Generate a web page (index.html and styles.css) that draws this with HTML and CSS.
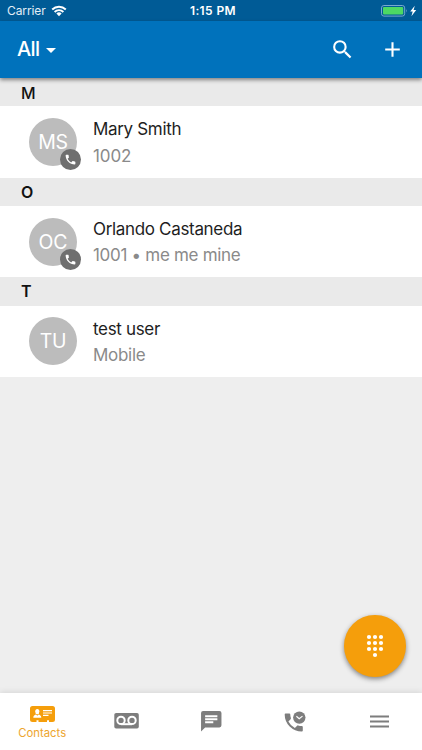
FILE: index.html
```html
<!DOCTYPE html>
<html lang="en">
<head>
<meta charset="utf-8">
<title>Contacts</title>
<link rel="stylesheet" href="styles.css">
</head>
<body>
<div class="app">
  <div class="status">
    <div class="carrier"><span>Carrier</span>
      <svg width="16" height="12" viewBox="0 0 16 12"><path d="M1.2 4.5a9.7 9.7 0 0 1 13.6 0M3.6 7a6.2 6.2 0 0 1 8.8 0" fill="none" stroke="#fff" stroke-width="1.9"/><path d="M5.4 8.6a3.7 3.7 0 0 1 5.2 0L8 11.3z" fill="#fff"/></svg>
    </div>
    <span class="time">1:15 PM</span>
    <svg class="battery" width="37" height="12" viewBox="0 0 37 12"><rect x=".5" y=".5" width="23.2" height="10.6" rx="2.4" fill="none" stroke="#78a9cf"/><rect x="2" y="2" width="20.2" height="7.6" rx="1" fill="#4cd964"/><path d="M25 4q1.4 1.8 0 3.6z" fill="#78a9cf"/><path d="M33.8 .8 29.2 6.5h2.5L30.4 11.2 35.2 5.1h-2.6z" fill="#fff"/></svg>
  </div>
  <header class="bar">
    <div class="filter"><span>All</span><svg width="10" height="5" viewBox="0 0 10 5"><path d="M0 0h10L5 5z" fill="#fff"/></svg></div>
    <div class="actions">
      <svg width="25" height="25" viewBox="0 0 24 24" fill="#fff"><path d="M15.5 14h-.79l-.28-.27A6.47 6.47 0 0 0 16 9.5 6.5 6.5 0 1 0 9.5 16c1.61 0 3.09-.59 4.23-1.57l.27.28v.79l5 4.99L20.49 19zm-6 0a4.5 4.5 0 1 1 0-9 4.5 4.5 0 0 1 0 9z"/></svg>
      <svg width="25" height="25" viewBox="0 0 24 24" fill="#fff"><path d="M19 13h-6v6h-2v-6H5v-2h6V5h2v6h6z"/></svg>
    </div>
  </header>
  <main class="list">
    <h2 class="section first">M</h2>
    <div class="row">
      <div class="avatar">MS<span class="badge"><svg width="13" height="13" viewBox="0 0 24 24"><path fill="#fff" d="M6.62 10.79a15.15 15.15 0 0 0 6.59 6.59l2.2-2.2a1 1 0 0 1 1.02-.24c1.12.37 2.33.57 3.57.57.55 0 1 .45 1 1V20c0 .55-.45 1-1 1C10.61 21 3 13.39 3 4c0-.55.45-1 1-1h3.5c.55 0 1 .45 1 1 0 1.25.2 2.45.57 3.57.11.35.03.74-.25 1.02z"/></svg></span></div>
      <div class="info"><div class="name">Mary Smith</div><div class="detail numeric">1002</div></div>
    </div>
    <h2 class="section">O</h2>
    <div class="row">
      <div class="avatar">OC<span class="badge"><svg width="13" height="13" viewBox="0 0 24 24"><path fill="#fff" d="M6.62 10.79a15.15 15.15 0 0 0 6.59 6.59l2.2-2.2a1 1 0 0 1 1.02-.24c1.12.37 2.33.57 3.57.57.55 0 1 .45 1 1V20c0 .55-.45 1-1 1C10.61 21 3 13.39 3 4c0-.55.45-1 1-1h3.5c.55 0 1 .45 1 1 0 1.25.2 2.45.57 3.57.11.35.03.74-.25 1.02z"/></svg></span></div>
      <div class="info"><div class="name">Orlando Castaneda</div><div class="detail">1001 • me me mine</div></div>
    </div>
    <h2 class="section">T</h2>
    <div class="row">
      <div class="avatar">TU</div>
      <div class="info last"><div class="name">test user</div><div class="detail">Mobile</div></div>
    </div>
  </main>
  <div class="fab"><svg width="18" height="24" viewBox="0 0 18 24" fill="#fff"><circle cx="3" cy="3" r="2.1"/><circle cx="9" cy="3" r="2.1"/><circle cx="15" cy="3" r="2.1"/><circle cx="3" cy="9" r="2.1"/><circle cx="9" cy="9" r="2.1"/><circle cx="15" cy="9" r="2.1"/><circle cx="3" cy="15" r="2.1"/><circle cx="9" cy="15" r="2.1"/><circle cx="15" cy="15" r="2.1"/><circle cx="9" cy="21" r="2.1"/></svg></div>
  <nav class="nav">
    <div class="tab active">
      <svg width="25" height="16" viewBox="0 0 25 16"><path fill="#f59e0b" d="M2.5 0h20A2.5 2.5 0 0 1 25 2.5v11a2.5 2.5 0 0 1-2.5 2.5H19v-1.7h-2V16H8.500v-1.700h-2V16h-4A2.500 2.500 0 0 1 0 13.500v-11A2.500 2.500 0 0 1 2.500 0z"/><ellipse cx="7.300" cy="5.600" rx="2.100" ry="2.700" fill="#fff"/><path d="M3.300 11.700c0-2 1.500-2.800 2.800-3.100l1.200 1.200 1.200-1.200c1.300.3 2.800 1.100 2.800 3.100z" fill="#fff"/><path d="M13 4.600h9M13 7h9M13 9.400h5.500" stroke="#fff" stroke-width="1.100"/></svg>
      <span>Contacts</span>
    </div>
    <div class="tab voicemail"><svg width="25" height="16" viewBox="0 0 25 16"><rect x=".3" width="24.500" height="15.500" rx="1.800" fill="#7d7d7d"/><g fill="none" stroke="#fff" stroke-width="2"><circle cx="7" cy="7.400" r="3.700"/><circle cx="18" cy="7.400" r="3.700"/><path d="M7 11.200h11"/></g></svg></div>
    <div class="tab"><svg width="24.500" height="24.500" viewBox="0 0 24 24" fill="#7d7d7d"><path d="M20 2H4a2 2 0 0 0-1.990 2L2 22l4-4h14a2 2 0 0 0 2-2V4a2 2 0 0 0-2-2zM6 9h12v2H6zm8 5H6v-2h8zm4-6H6V6h12z"/></svg></div>
    <div class="tab"><svg width="22" height="22" viewBox="0 0 22 22"><path fill="#7d7d7d" d="M1.500 2.500h3.800a1 1 0 0 1 1 1c0 1.300.2 2.500.6 3.600a1 1 0 0 1-.3 1.100L4.400 10.400a15 15 0 0 0 6.500 6.500l2.200-2.200a1 1 0 0 1 1-.3c1.200.4 2.400.6 3.700.6a1 1 0 0 1 1 1v3.600a1 1 0 0 1-1 1A17 17 0 0 1 .7 3.500a1 1 0 0 1 .8-1z"/><circle cx="15.300" cy="6.600" r="6.200" fill="#7d7d7d"/><path d="m12.400 5.300 2.800 2.500 3.300-2.700" fill="none" stroke="#fff" stroke-width="1.200"/></svg></div>
    <div class="tab"><svg width="19" height="13" viewBox="0 0 19 13"><path d="M0 1.500h19M0 6.500h19M0 11.500h19" stroke="#7d7d7d" stroke-width="1.800"/></svg></div>
  </nav>
</div>
</body>
</html>
```
FILE: styles.css
```css
* { box-sizing: border-box; }
body { margin: 0; font-family: Inter, Roboto, sans-serif; }
svg { display: block; flex: none; }
.app {
  position: relative;
  width: 422px;
  height: 750px;
  display: flex;
  flex-direction: column;
  background: #eeeeee;
  overflow: hidden;
}
.status {
  flex: none;
  height: 21px;
  display: grid;
  grid-template-columns: 1fr auto 1fr;
  align-items: center;
  padding: 0 4px 0 7px;
  background: #005b96;
  color: #fff;
  font-size: 12px;
  line-height: 22px;
}
.carrier { display: flex; align-items: center; gap: 5px; }
.carrier span { letter-spacing: -0.1px; color: #e3eef6; }
.carrier svg { margin-top: -1px; }
.time { font-weight: 600; letter-spacing: 0.4px; margin-left: 1px; }
.battery { justify-self: end; }
.bar {
  position: relative;
  z-index: 1;
  flex: none;
  height: 57px;
  display: flex;
  align-items: center;
  justify-content: space-between;
  padding: 0 17px 0 17px;
  background: #0072bc;
  box-shadow: 0 2px 4px rgba(0, 0, 0, 0.45);
  color: #fff;
}
.filter { display: flex; align-items: center; gap: 7px; font-size: 20px; font-weight: 500; }
.filter span { letter-spacing: -0.6px; margin-top: -2px; }
.filter svg { margin-top: 2px; }
.actions { display: flex; gap: 25px; }
.list { flex: 1; }
.section {
  margin: 0;
  height: 28.4px;
  padding-left: 21px;
  line-height: 29px;
  font-size: 16px;
  font-weight: 600;
  color: #111;
  background: #eaeaea;
}
.first { font-weight: 500; line-height: 30px; }
.row {
  height: 71.3px;
  display: flex;
  align-items: center;
  padding-left: 29px;
  gap: 16px;
  background: #fff;
}
.avatar {
  position: relative;
  width: 48px;
  height: 48px;
  border-radius: 50%;
  background: #bcbcbc;
  color: #fff;
  font-size: 19.5px;
  letter-spacing: -0.2px;
  line-height: 48px;
  text-align: center;
}
.badge {
  position: absolute;
  left: 31px;
  top: 31px;
  width: 21px;
  height: 21px;
  border-radius: 50%;
  background: #6f6f6f;
  display: flex;
  align-items: center;
  justify-content: center;
}
.info { line-height: 26.5px; white-space: nowrap; margin-top: 1px; }
.last { margin-top: 2px; }
.name { font-size: 17px; letter-spacing: -0.33px; color: #1e1e1e; }
.detail { font-size: 17px; letter-spacing: -0.3px; color: #8a8a8a; }
.numeric { letter-spacing: -0.1px; }
.fab {
  position: absolute;
  left: 344px;
  top: 615px;
  width: 61.5px;
  height: 61.5px;
  border-radius: 50%;
  background: #f59e0b;
  box-shadow: 0 2px 5px rgba(0, 0, 0, 0.45);
  display: flex;
  align-items: center;
  justify-content: center;
}
.nav {
  flex: none;
  height: 57px;
  display: grid;
  grid-template-columns: repeat(5, 1fr);
  background: #fff;
  box-shadow: 0 -1px 6px rgba(0, 0, 0, 0.1);
}
.tab { display: flex; flex-direction: column; align-items: center; justify-content: center; }
.voicemail { padding-bottom: 2px; }
.active { justify-content: flex-start; padding-top: 13px; color: #eda52d; font-size: 11.3px; line-height: 14px; }
.active span { margin-top: 4px; }
```
